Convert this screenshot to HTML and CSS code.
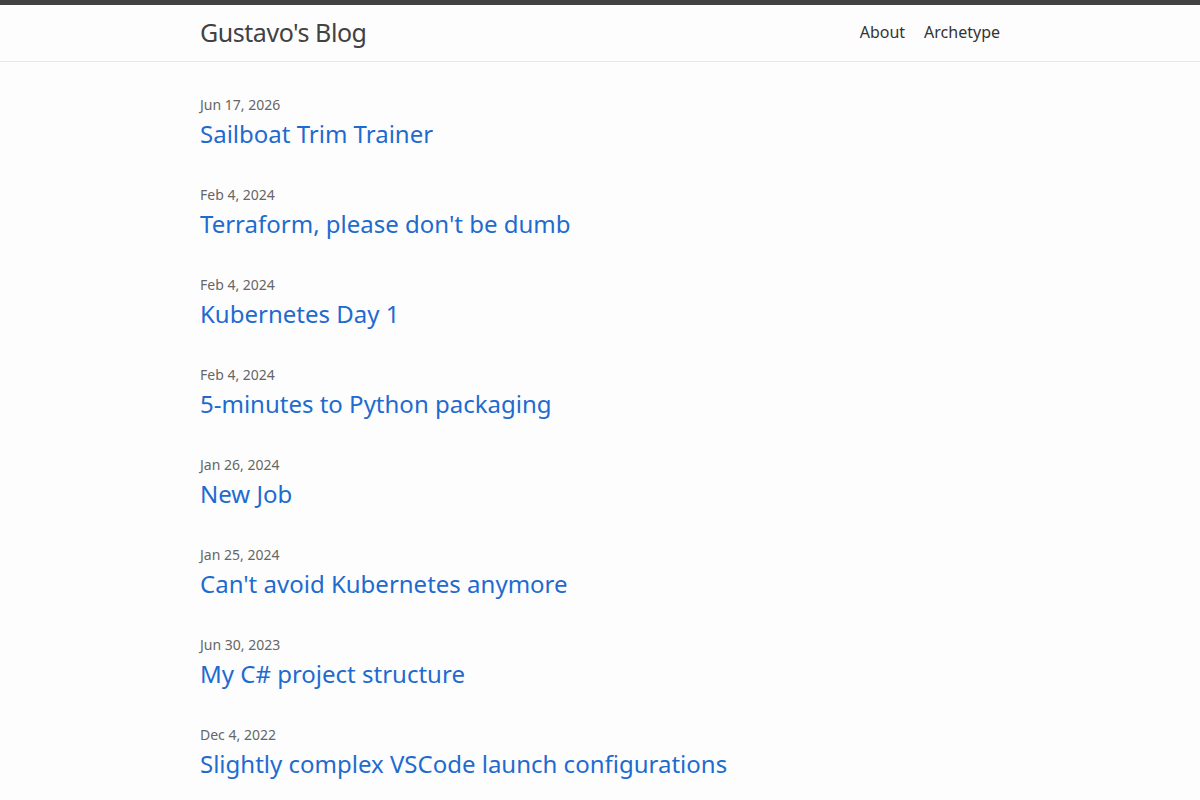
FILE: index.html
```html
<!DOCTYPE html>
<html lang="en">
<head>
<meta charset="utf-8">
<title>Gustavo's Blog</title>
<link rel="stylesheet" href="styles.css">
</head>
<body>
<header class="site-header">
  <div class="wrap header-inner">
    <a class="site-title" href="#">Gustavo's Blog</a>
    <nav class="site-nav">
      <a class="nav-link" href="#">About</a>
      <a class="nav-link" href="#">Archetype</a>
    </nav>
  </div>
</header>
<main class="wrap post-list">
  <article class="post"><span class="post-date">Jun 17, 2026</span><a class="post-title" href="#">Sailboat Trim Trainer</a></article>
  <article class="post"><span class="post-date">Feb 4, 2024</span><a class="post-title" href="#">Terraform, please don't be dumb</a></article>
  <article class="post"><span class="post-date">Feb 4, 2024</span><a class="post-title" href="#">Kubernetes Day 1</a></article>
  <article class="post"><span class="post-date">Feb 4, 2024</span><a class="post-title" href="#">5-minutes to Python packaging</a></article>
  <article class="post"><span class="post-date">Jan 26, 2024</span><a class="post-title" href="#">New Job</a></article>
  <article class="post"><span class="post-date">Jan 25, 2024</span><a class="post-title" href="#">Can't avoid Kubernetes anymore</a></article>
  <article class="post"><span class="post-date">Jun 30, 2023</span><a class="post-title" href="#">My C# project structure</a></article>
  <article class="post"><span class="post-date">Dec 4, 2022</span><a class="post-title" href="#">Slightly complex VSCode launch configurations</a></article>
</main>
</body>
</html>
```
FILE: styles.css
```css
html, body {
  margin: 0;
  padding: 0;
}
body {
  background: #fdfdfd;
  color: #111;
  font-family: "Noto Sans", "Open Sans", sans-serif;
}
.wrap {
  width: 800px;
  margin: 0 auto;
}
.site-header {
  border-top: 5px solid #424242;
  border-bottom: 1px solid #e8e8e8;
  background: #fdfdfd;
}
.header-inner {
  height: 56px;
  box-sizing: border-box;
  padding-bottom: 2px;
  display: flex;
  align-items: center;
  justify-content: space-between;
}
.site-title {
  font-size: 25px;
  color: #424242;
  text-decoration: none;
  letter-spacing: -0.45px;
}
.site-nav {
  display: flex;
  gap: 19px;
}
.nav-link {
  font-size: 16px;
  color: #333;
  text-decoration: none;
}
.post-list {
  padding-top: 32px;
  display: flex;
  flex-direction: column;
  gap: 32px;
}
.post {
  display: flex;
  flex-direction: column;
}
.post-date {
  font-size: 14px;
  color: #666;
  line-height: 22px;
}
.post-title {
  font-size: 24px;
  color: #1e6bd0;
  text-decoration: none;
  line-height: 36px;
}
```
